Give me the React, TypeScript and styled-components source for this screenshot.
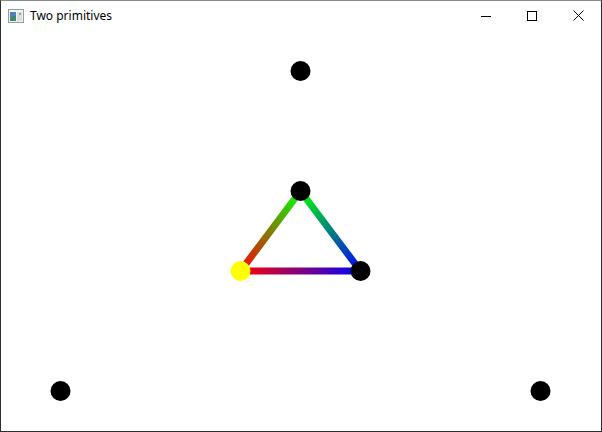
import React from "react";
import styled, { createGlobalStyle } from "styled-components";

const Global = createGlobalStyle`
  html, body { margin: 0; padding: 0; background: #ffffff; }
  body { font-family: "Noto Sans", "Open Sans", sans-serif; }
`;

const Window = styled.div`
  width: 602px;
  height: 432px;
  box-sizing: border-box;
  border: 1px solid #2e2e2e;
  border-top-color: #8a8a8a;
  background: #ffffff;
  display: flex;
  flex-direction: column;
  overflow: hidden;
`;

const TitleBar = styled.div`
  height: 30px;
  display: flex;
  align-items: center;
  flex-shrink: 0;
`;

const AppIcon = styled.svg`
  width: 16px;
  height: 16px;
  margin-left: 7px;
  margin-right: 6px;
`;

const Title = styled.span`
  font-family: "Noto Sans", "Open Sans", sans-serif;
  font-size: 12px;
  color: #000000;
  flex: 1;
  line-height: 1;
`;

const Controls = styled.div`
  display: flex;
  height: 100%;
  align-items: stretch;
`;

const CtrlButton = styled.div`
  width: 46px;
  display: flex;
  align-items: center;
  justify-content: center;
  padding-bottom: 1px;
`;

const Canvas = styled.svg`
  display: block;
  width: 600px;
  height: 400px;
`;

const pts = {
  top: [299.5, 40],
  mid: [299.5, 160],
  left: [239.5, 240],
  right: [359.5, 240],
  bl: [59.5, 360],
  br: [539.5, 360],
};

export default function App() {
  return (
    <>
      <Global />
      <Window>
        <TitleBar>
          <AppIcon viewBox="0 0 16 16">
            <rect x="0.5" y="1.5" width="15" height="13" fill="#f4f4f4" stroke="#9a9a9a" />
            <rect x="2" y="4" width="6" height="9" fill="#3f8a6e" />
            <rect x="2" y="4" width="6" height="4" fill="#4f7fc0" />
            <rect x="9" y="4" width="5" height="9" fill="#dcdcdc" />
            <rect x="11" y="5" width="2" height="2" fill="#7fae8f" />
          </AppIcon>
          <Title>Two primitives</Title>
          <Controls>
            <CtrlButton>
              <svg width="10" height="10" viewBox="0 0 10 10">
                <line x1="0" y1="5.5" x2="10" y2="5.5" stroke="#000" strokeWidth="1" />
              </svg>
            </CtrlButton>
            <CtrlButton>
              <svg width="10" height="10" viewBox="0 0 10 10">
                <rect x="0.5" y="0.5" width="9" height="9" fill="none" stroke="#000" strokeWidth="1" />
              </svg>
            </CtrlButton>
            <CtrlButton>
              <svg width="11" height="11" viewBox="0 0 11 11">
                <path d="M0.5 0.5 L10.5 10.5 M10.5 0.5 L0.5 10.5" stroke="#000" strokeWidth="1" />
              </svg>
            </CtrlButton>
          </Controls>
        </TitleBar>
        <Canvas viewBox="0 0 600 400">
          <defs>
            <linearGradient id="gL" gradientUnits="userSpaceOnUse" x1={pts.left[0]} y1={pts.left[1]} x2={pts.mid[0]} y2={pts.mid[1]}>
              <stop offset="0" stopColor="#ff0000" />
              <stop offset="1" stopColor="#00ff00" />
            </linearGradient>
            <linearGradient id="gR" gradientUnits="userSpaceOnUse" x1={pts.mid[0]} y1={pts.mid[1]} x2={pts.right[0]} y2={pts.right[1]}>
              <stop offset="0" stopColor="#00ff00" />
              <stop offset="1" stopColor="#0000ff" />
            </linearGradient>
            <linearGradient id="gB" gradientUnits="userSpaceOnUse" x1={pts.left[0]} y1={pts.left[1]} x2={pts.right[0]} y2={pts.right[1]}>
              <stop offset="0" stopColor="#ff0000" />
              <stop offset="1" stopColor="#0000ff" />
            </linearGradient>
          </defs>
          <line x1={pts.left[0]} y1={pts.left[1]} x2={pts.mid[0]} y2={pts.mid[1]} stroke="url(#gL)" strokeWidth="7" />
          <line x1={pts.mid[0]} y1={pts.mid[1]} x2={pts.right[0]} y2={pts.right[1]} stroke="url(#gR)" strokeWidth="7" />
          <line x1={pts.left[0]} y1={pts.left[1]} x2={pts.right[0]} y2={pts.right[1]} stroke="url(#gB)" strokeWidth="7" />
          <circle cx={pts.top[0]} cy={pts.top[1]} r="10" fill="#000" />
          <circle cx={pts.mid[0]} cy={pts.mid[1]} r="10" fill="#000" />
          <circle cx={pts.left[0]} cy={pts.left[1]} r="10" fill="#ffff00" />
          <circle cx={pts.right[0]} cy={pts.right[1]} r="10" fill="#000" />
          <circle cx={pts.bl[0]} cy={pts.bl[1]} r="10" fill="#000" />
          <circle cx={pts.br[0]} cy={pts.br[1]} r="10" fill="#000" />
        </Canvas>
      </Window>
    </>
  );
}
